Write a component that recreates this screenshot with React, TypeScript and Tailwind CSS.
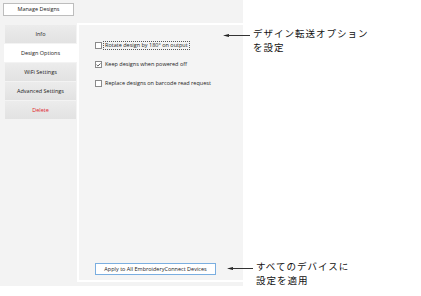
import { Check } from "lucide-react";

const TABS = [
  { label: "Info" },
  { label: "Design Options", active: true },
  { label: "WiFi Settings" },
  { label: "Advanced Settings" },
  { label: "Delete", danger: true },
];

const OPTIONS = [
  { label: "Rotate design by 180° on output", checked: false, focus: true },
  { label: "Keep designs when powered off", checked: true },
  { label: "Replace designs on barcode read request", checked: false },
];

function Callout({
  pos,
  arrowTop,
  arrowWidth,
  lines,
}: {
  pos: string;
  arrowTop: string;
  arrowWidth: number;
  lines: string[];
}) {
  return (
    <div className={`absolute ${pos} flex items-start`}>
      <div className={`${arrowTop} flex items-center`}>
        <svg width={arrowWidth} height="3" viewBox={`0 0 ${arrowWidth} 3`}>
          <path d="M0 1.5 L6 0 L6 3 Z" fill="#222" />
          <line x1="5" y1="1.5" x2={arrowWidth} y2="1.5" stroke="#333" strokeWidth="1" />
        </svg>
      </div>
      <div className="ml-[3px] text-[9.5px] leading-[14px] text-[#111] font-['Noto_Sans_CJK_JP',sans-serif] tracking-[1px]">
        {lines.map((l) => (
          <div key={l} className="h-[14px]">
            {l}
          </div>
        ))}
      </div>
    </div>
  );
}

export default function App() {
  return (
    <div className="relative w-[421px] h-[296px] bg-white overflow-hidden font-['Open_Sans',sans-serif] text-[#222]">
      <div className="w-[243px] h-[286px] bg-[#f3f3f3] flex flex-col">
        <div className="pl-[3px] pt-[3px] h-[23px]">
          <div className="w-[71px] h-[13px] bg-white border border-[#bdbdbd] flex items-center justify-center text-[5.5px]">
            Manage Designs
          </div>
        </div>

        <div className="flex flex-1 pb-[4px]">
          <div className="w-[77px] pt-[2px] flex flex-col gap-[1px]">
            {TABS.map((t) => (
              <div
                key={t.label}
                className={`h-[18px] flex items-center justify-center text-[5.5px] ${
                  t.active
                    ? "ml-[4px] w-[73px] bg-white"
                    : "ml-[5px] w-[71px] bg-gradient-to-b from-[#ececec] to-[#e2e2e2]"
                } ${t.danger ? "text-[#e0242a]" : ""}`}
              >
                {t.label}
              </div>
            ))}
          </div>

          <div className="flex-1 border-l-2 border-t-2 border-b-2 border-white bg-[#f4f4f4] flex flex-col">
            <div className="pl-[16px] pt-[17px] flex flex-col gap-[12px]">
              {OPTIONS.map((o) => (
                <div key={o.label} className="flex items-center h-[7px]">
                  <div className="w-[7px] h-[7px] border border-[#8a8a8a] bg-white flex items-center justify-center">
                    {o.checked ? <Check className="w-[6px] h-[6px] text-[#333]" strokeWidth={4} /> : null}
                  </div>
                  <span
                    className={`ml-[2px] text-[5.5px] leading-[7px] px-[1px] ${
                      o.focus ? "outline outline-1 outline-dotted outline-[#555]" : ""
                    }`}
                  >
                    {o.label}
                  </span>
                </div>
              ))}
            </div>

            <div className="mt-auto pl-[16px] pb-[5px]">
              <div className="w-[121px] h-[12px] bg-white border border-[#7aaee0] flex items-center justify-center text-[5.5px]">
                Apply to All EmbroideryConnect Devices
              </div>
            </div>
          </div>
        </div>
      </div>

      <Callout
        pos="left-[223px] top-[26px]"
        arrowTop="mt-[8px]"
        arrowWidth={27}
        lines={["デザイン転送オプション", "を設定"]}
      />
      <Callout
        pos="left-[227px] top-[259px]"
        arrowTop="mt-[8px]"
        arrowWidth={26}
        lines={["すべてのデバイスに", "設定を適用"]}
      />
    </div>
  );
}
